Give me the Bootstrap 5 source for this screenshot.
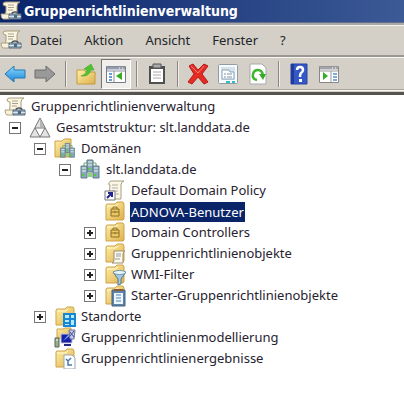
<!DOCTYPE html>
<html lang="de">
<head>
<meta charset="utf-8">
<meta name="viewport" content="width=device-width, initial-scale=1">
<title>Gruppenrichtlinienverwaltung</title>
<link href="https://cdn.jsdelivr.net/npm/bootstrap@5.3.0/dist/css/bootstrap.min.css" rel="stylesheet">
<style>
body{font-family:"Noto Sans","Open Sans",sans-serif;font-size:13px;line-height:21px;color:#27222f;background:#fff}
button{color:inherit}
.ico{width:22px;height:22px;flex:none;display:block}
.titlebar{height:23px;gap:2px;background:linear-gradient(90deg,#0a246a,#3c5a96);color:#fff;border-bottom:1px solid #60708f}
.titlebar h1{font-family:"DejaVu Sans Condensed","DejaVu Sans",sans-serif;font-size:14px;font-weight:bold;line-height:22px}
.menus{background:#d4d0c8;height:34px;border-top:2px solid #aaa8a6;border-bottom:2px solid #9b9893;gap:22px;box-shadow:inset 0 1px #f5f3ee}
.menus .btn,.tools .btn{border:0;border-radius:0;padding:0;font-size:inherit;line-height:inherit}
.tools{background:#d4d0c8;height:33px;border-top:1px solid #f7f5f1;border-bottom:1px solid #aaa69f}
.tools .btn{width:30px;height:30px}
.tools .btn.active{background:#f1efec;border:1px solid #fff;border-top-color:#77746f;border-left-color:#77746f}
.divide{width:11px;height:26px;padding:0 5px}
.divide::before{content:"";display:block;width:1px;height:100%;background:#8b8883;box-shadow:1px 0 #efede8}
.edge{height:5px;background:#d4d0c8;border-top:1px solid #f8f6f2;border-bottom:3px solid #57534f}
.tree{padding-top:1px}
.tree ul{list-style:none;margin:0;padding:0}
.tree .kids .kids{padding-left:25px}
.node{height:21px;gap:5px}
.slot{width:20px;flex:none;padding-left:5px}
.toggle{width:12px;height:12px;display:block;padding:0;border:1px solid #77747a;background:#fff}
.toggle svg{display:block;width:10px;height:10px}
.picked{background:#0a246a;color:#fff;outline:1px solid #0a246a;line-height:18px}
</style>
<script src="https://cdn.jsdelivr.net/npm/bootstrap@5.3.0/dist/js/bootstrap.bundle.min.js"></script>
</head>
<body>
<svg class="position-absolute" width="0" height="0" aria-hidden="true">
<defs>
<linearGradient id="gold" x2="1" y2="1"><stop stop-color="#fff0a8"/><stop offset="1" stop-color="#dfb04c"/></linearGradient>
<linearGradient id="blue" y2="1" x2="0"><stop stop-color="#8bdcff"/><stop offset="1" stop-color="#1b83d6"/></linearGradient>
</defs>
<symbol id="scroll" viewBox="0 0 22 22"><path d="M6 2h14q-3 1-3 4v10H4q2-2 2-5V6Q3 6 3 4t3-2z" fill="#fbf5df" stroke="#a99c7c"/><path d="M8 5h6M8 7.500h6M8 10h5" stroke="#a8a293"/><path d="M1 14h9v5H3q-2-1-2-5z" fill="#f8f2dc" stroke="#aaa080"/></symbol>
<symbol id="gp" viewBox="0 0 22 22"><use href="#scroll"/><path d="M12 14q0-2 3-2t3 2" fill="none" stroke="#4d5964" stroke-width="1.500"/><path d="M9 14h12v5H9z" fill="#93aabb" stroke="#596b7c"/><path d="M9 16.500h12" stroke="#d8e3ea"/><path d="M14 15h3v3h-3z" fill="#4b6880"/></symbol>
<symbol id="folder" viewBox="0 0 22 22"><path d="M2 4l1-1h8l2-2h6l1 2v15l-1 1H2z" fill="url(#gold)" stroke="#cda34a"/><path d="M3 5h9l2-2" fill="none" stroke="#fff8cf"/></symbol>
<symbol id="ou" viewBox="0 0 22 22"><use href="#folder"/><path d="M7 8h8v7H7z" fill="#e9c765" stroke="#8b7024"/><path d="M9 8V6h4v2M7 11h8M11 10v2" fill="none" stroke="#8b7024"/></symbol>
<symbol id="forest" viewBox="0 0 22 22"><path d="M11 1l10 19H1z" fill="#e3e3e3" stroke="#777"/><path d="M6 11h10l-5 9z" fill="#fff" stroke="#777"/><path d="M11 2l4 8h-4z" fill="#b5b5b5"/></symbol>
<symbol id="tower" viewBox="0 0 8 14"><path d="M1 1h6v12H1z" fill="#88a9b9" stroke="#607b86"/><path d="M2 3h4M2 6h4" stroke="#e5f5fa"/><path d="M2 9h2v2H2z" fill="#57c83b"/></symbol>
<symbol id="domain" viewBox="0 0 22 22"><path d="M5 8V4h12v4M11 4v8" fill="none" stroke="#76a46f"/><use href="#tower" x="7" y="0" width="8" height="14"/><use href="#tower" x="1" y="6" width="8" height="14"/><use href="#tower" x="13" y="6" width="8" height="14"/><path d="M9 14h4v4H9z" fill="#8ed27b"/></symbol>
<symbol id="domains" viewBox="0 0 22 22"><path d="M1 3h7l2-2h7v18H1z" fill="url(#gold)" stroke="#cda34a"/><use href="#domain" x="5" y="4" width="17" height="18"/></symbol>
<symbol id="link" viewBox="0 0 22 22"><path d="M7 1h13q-3 1-3 4v14H5l1-14Q4 5 5 3t2-2z" fill="#fbf7e6" stroke="#a79e84"/><path d="M8 5h6M8 8h6M8 11h6M12 14h3" stroke="#b1aba0"/><path d="M1 11h10v9H1z" fill="#fff" stroke="#777"/><path d="M3 18l5-5M4 13h4v4" fill="none" stroke="#25258f" stroke-width="2"/></symbol>
<symbol id="gpo" viewBox="0 0 22 22"><use href="#folder"/><path d="M10 8h11q-2 1-2 3v9H8q2-1 2-3z" fill="#fcfaf0" stroke="#9b8e6c"/><path d="M12 11h5M12 13h5M11 16h5" stroke="#999"/></symbol>
<symbol id="wmi" viewBox="0 0 22 22"><use href="#folder"/><path d="M9 8h13l-5 7v5l-3 1v-6z" fill="#a2c9e3" stroke="#587890"/><ellipse cx="15.500" cy="8.500" rx="6" ry="2" fill="#e5f6ff" stroke="#7394a9"/></symbol>
<symbol id="starter" viewBox="0 0 22 22"><use href="#folder"/><path d="M8 5h13v16H8z" fill="#5d83a6" stroke="#446383"/><path d="M10 8h9v11h-9z" fill="#edf6fb"/><path d="M12 10h5M12 13h5M12 16h5" stroke="#5085b8"/><path d="M10 5h9" stroke="#8d5933" stroke-width="2"/></symbol>
<symbol id="sites" viewBox="0 0 22 22"><use href="#folder"/><path d="M9 7h13v14H9z" fill="#1687d5"/><path d="M11 9h4v3h-4zM17 9h3v3h-3zM11 14h4v2h-4zM17 14h3v5h-3zM11 18h4v1h-4z" fill="#b7e9ff"/></symbol>
<symbol id="model" viewBox="0 0 22 22"><path d="M3 2h6l2-1h6v10H3z" fill="url(#gold)" stroke="#cda34a"/><path d="M7 7h11v9H7z" fill="#1820a8" stroke="#c9cbd8"/><path d="M9 14l5-6h3z" fill="#68a6ff"/><path d="M10 18h7" stroke="#252986" stroke-width="2"/><path d="M1 11h4v9H1z" fill="#9aad91" stroke="#596852"/><path d="M2 13h2" stroke="#fff"/><path d="M15 3h6l-1 9h-4z" fill="#c5cbe4" stroke="#6b749e"/><path d="M16 5l4 5M20 4l-4 5" stroke="#3f4795"/></symbol>
<symbol id="result" viewBox="0 0 22 22"><use href="#folder"/><path d="M10 7h8l3 3v11H10z" fill="#fff" stroke="#9ca7b4"/><path d="M12 11l2 2 3-3M14 13v4h4" fill="none" stroke="#4579ae" stroke-width="1.500"/></symbol>
<symbol id="back" viewBox="0 0 22 22"><path d="M1 11l9-8v4h11v8H10v4z" fill="url(#blue)" stroke="#2079b4" stroke-linejoin="round"/></symbol>
<symbol id="fwd" viewBox="0 0 22 22"><path d="M21 11l-9-8v4H1v8h11v4z" fill="#999" stroke="#6d6d6d" stroke-linejoin="round"/></symbol>
<symbol id="up" viewBox="0 0 22 22"><path d="M2 7h7l2 2h9v12H2z" fill="url(#gold)" stroke="#c49b3c"/><path d="M6 13q5-1 6-6l-3-1 7-5 3 6-3 0q-2 7-10 6z" fill="#51c331" stroke="#3b9c25" stroke-width=".5"/></symbol>
<symbol id="pane" viewBox="0 0 22 22"><path d="M1.500 3.500h19v16h-19z" fill="#fff" stroke="#777b88"/><path d="M2 5h18" stroke="#939bac" stroke-width="3"/><path d="M14 5h1M17 5h1" stroke="#fff"/><path d="M2 8h18M9 8v11" stroke="#888f9e"/><path d="M4 11h3M4 14h3M4 17h3" stroke="#387fc6" stroke-width="1.500"/><path d="M17 9v8l-6-4z" fill="#35aa23"/></symbol>
<symbol id="clip" viewBox="0 0 22 22"><path d="M3 3h16v18H3z" fill="#50504f"/><path d="M5 6h12v13H5z" fill="#fff"/><path d="M7 1h8v4H7z" fill="#aaa" stroke="#555"/><path d="M7 9h8M7 12h8M7 15h8" stroke="#aaa"/></symbol>
<symbol id="cross" viewBox="0 0 22 22"><path d="M2 3l4-2 5 6 6-6 4 2-6 8 6 8-4 2-6-7-6 7-4-2 6-8z" fill="#e42c22" stroke="#b61b19"/><path d="M4 3l7 7 6-7" fill="none" stroke="#ff7b6e"/></symbol>
<symbol id="props" viewBox="0 0 22 22"><rect x="1.500" y="1.500" width="19" height="19" rx="1" fill="#f8fbfd" stroke="#929ca4"/><path d="M4 4h14v13H4z" fill="#d5e2eb"/><path d="M5 7h7l1 2h4v7H5z" fill="#fff" stroke="#8ba4b7"/><path d="M7 11h2M10 11h5M7 14h2M10 14h5" stroke="#7993a8"/><path d="M9 19h4M15 19h3" stroke="#32bad1" stroke-width="2"/></symbol>
<symbol id="refresh" viewBox="0 0 22 22"><path d="M3 1h12l4 4v16H3z" fill="#fff" stroke="#aaa"/><path d="M10 17q-5-1-4-6 1-4 5-4 4 0 5 5" fill="none" stroke="#3db52d" stroke-width="2.500"/><path d="M12 11h7l-3 6z" fill="#37a927"/></symbol>
<symbol id="help" viewBox="0 0 22 22"><path d="M3 1h16v20H3z" fill="#3558c7" stroke="#2944a3"/><path d="M3 1h3v20H3z" fill="#203b99"/><path d="M9 7q0-3 3-3t3 3q0 2-2 3-1 1-1 4" fill="none" stroke="#fff" stroke-width="2.500"/><path d="M11 16h3v3h-3z" fill="#fff"/></symbol>
<symbol id="console" viewBox="0 0 22 22"><path d="M1.500 3.500h19v16h-19z" fill="#fff" stroke="#888"/><path d="M2 5h18" stroke="#a3a3aa" stroke-width="3"/><path d="M14 5h1M17 5h1" stroke="#fff"/><path d="M2 8h18M13 8v11" stroke="#999"/><path d="M5 9v8l5-4z" fill="#38ad28"/><path d="M15 11h4M15 14h4M15 17h4" stroke="#5a8dc1" stroke-width="1.500"/></symbol>
<symbol id="minus" viewBox="0 0 10 10"><path d="M2 4h6v2H2z" fill="#222"/></symbol>
<symbol id="plus" viewBox="0 0 10 10"><path d="M2 4h6v2H2zM4 2h2v6H4z" fill="#222"/></symbol>
</svg>
<header>
<div class="titlebar d-flex align-items-center overflow-hidden"><svg class="ico"><use href="#gp"/></svg><h1 class="m-0 text-nowrap">Gruppenrichtlinienverwaltung</h1></div>
<nav class="menus d-flex align-items-center" aria-label="Menü">
<div class="d-flex align-items-center gap-2"><svg class="ico"><use href="#gp"/></svg><button class="btn">Datei</button></div>
<button class="btn">Aktion</button><button class="btn">Ansicht</button><button class="btn">Fenster</button><button class="btn">?</button>
</nav>
<div class="tools d-flex align-items-center" role="toolbar" aria-label="Werkzeuge">
<button class="btn d-flex align-items-center justify-content-center" aria-label="Zurück"><svg class="ico"><use href="#back"/></svg></button>
<button class="btn d-flex align-items-center justify-content-center" aria-label="Vorwärts"><svg class="ico"><use href="#fwd"/></svg></button>
<span class="divide"></span>
<button class="btn d-flex align-items-center justify-content-center" aria-label="Nach oben"><svg class="ico"><use href="#up"/></svg></button>
<button class="btn active d-flex align-items-center justify-content-center" aria-pressed="true" aria-label="Konsolenstruktur"><svg class="ico"><use href="#pane"/></svg></button>
<span class="divide"></span>
<button class="btn d-flex align-items-center justify-content-center" aria-label="Einfügen"><svg class="ico"><use href="#clip"/></svg></button>
<span class="divide"></span>
<button class="btn d-flex align-items-center justify-content-center" aria-label="Löschen"><svg class="ico"><use href="#cross"/></svg></button>
<button class="btn d-flex align-items-center justify-content-center" aria-label="Eigenschaften"><svg class="ico"><use href="#props"/></svg></button>
<button class="btn d-flex align-items-center justify-content-center" aria-label="Aktualisieren"><svg class="ico"><use href="#refresh"/></svg></button>
<span class="divide"></span>
<button class="btn d-flex align-items-center justify-content-center" aria-label="Hilfe"><svg class="ico"><use href="#help"/></svg></button>
<button class="btn d-flex align-items-center justify-content-center" aria-label="Aktionsbereich"><svg class="ico"><use href="#console"/></svg></button>
</div>
<div class="edge"></div>
</header>
<main class="tree ps-1 text-nowrap">
<ul>
<li><div class="node d-flex align-items-center"><svg class="ico"><use href="#gp"/></svg><span>Gruppenrichtlinienverwaltung</span></div>
<ul class="kids">
<li><div class="node d-flex align-items-center"><span class="slot"><button class="toggle" aria-label="Reduzieren"><svg><use href="#minus"/></svg></button></span><svg class="ico"><use href="#forest"/></svg><span>Gesamtstruktur: slt.landdata.de</span></div>
<ul class="kids">
<li><div class="node d-flex align-items-center"><span class="slot"><button class="toggle" aria-label="Reduzieren"><svg><use href="#minus"/></svg></button></span><svg class="ico"><use href="#domains"/></svg><span>Domänen</span></div>
<ul class="kids">
<li><div class="node d-flex align-items-center"><span class="slot"><button class="toggle" aria-label="Reduzieren"><svg><use href="#minus"/></svg></button></span><svg class="ico"><use href="#domain"/></svg><span>slt.landdata.de</span></div>
<ul class="kids">
<li><div class="node d-flex align-items-center"><span class="slot"></span><svg class="ico"><use href="#link"/></svg><span>Default Domain Policy</span></div></li>
<li><div class="node d-flex align-items-center"><span class="slot"></span><svg class="ico"><use href="#ou"/></svg><span class="picked">ADNOVA-Benutzer</span></div></li>
<li><div class="node d-flex align-items-center"><span class="slot"><button class="toggle" aria-label="Erweitern"><svg><use href="#plus"/></svg></button></span><svg class="ico"><use href="#ou"/></svg><span>Domain Controllers</span></div></li>
<li><div class="node d-flex align-items-center"><span class="slot"><button class="toggle" aria-label="Erweitern"><svg><use href="#plus"/></svg></button></span><svg class="ico"><use href="#gpo"/></svg><span>Gruppenrichtlinienobjekte</span></div></li>
<li><div class="node d-flex align-items-center"><span class="slot"><button class="toggle" aria-label="Erweitern"><svg><use href="#plus"/></svg></button></span><svg class="ico"><use href="#wmi"/></svg><span>WMI-Filter</span></div></li>
<li><div class="node d-flex align-items-center"><span class="slot"><button class="toggle" aria-label="Erweitern"><svg><use href="#plus"/></svg></button></span><svg class="ico"><use href="#starter"/></svg><span>Starter-Gruppenrichtlinienobjekte</span></div></li>
</ul></li>
</ul></li>
<li><div class="node d-flex align-items-center"><span class="slot"><button class="toggle" aria-label="Erweitern"><svg><use href="#plus"/></svg></button></span><svg class="ico"><use href="#sites"/></svg><span>Standorte</span></div></li>
<li><div class="node d-flex align-items-center"><span class="slot"></span><svg class="ico"><use href="#model"/></svg><span>Gruppenrichtlinienmodellierung</span></div></li>
<li><div class="node d-flex align-items-center"><span class="slot"></span><svg class="ico"><use href="#result"/></svg><span>Gruppenrichtlinienergebnisse</span></div></li>
</ul></li>
</ul></li>
</ul>
</main>
</body>
</html>
